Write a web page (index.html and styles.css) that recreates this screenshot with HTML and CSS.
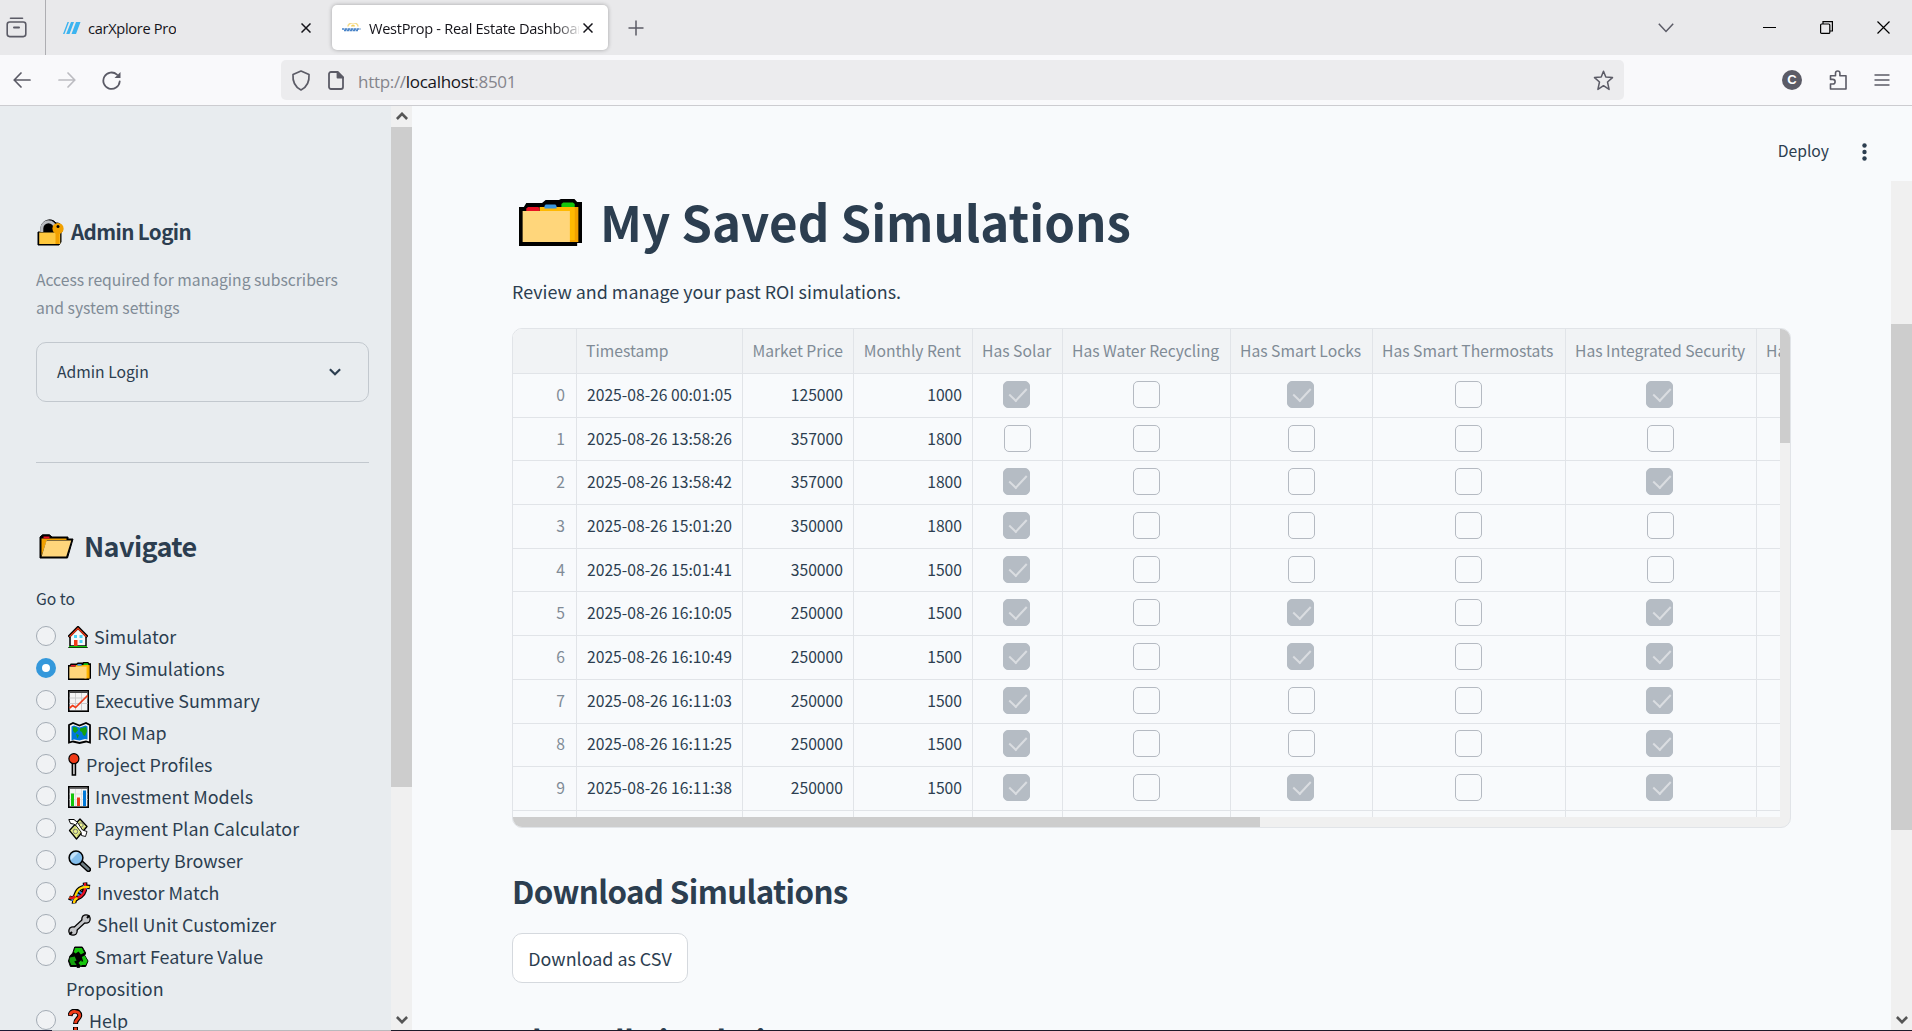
FILE: index.html
```html
<!DOCTYPE html>
<html lang="en">
<head>
<meta charset="utf-8">
<title>WestProp - Real Estate Dashboard</title>
<link rel="stylesheet" href="styles.css">
</head>
<body>
<header class="tabs">
  <div class="tab-history">
    <svg width="22" height="22" viewBox="0 0 22 22" fill="none" stroke="#5b5b66" stroke-width="1.6" stroke-linecap="round"><path d="M4.5 1.2h12"/><rect x="1.2" y="5" width="18.6" height="14.6" rx="2.5"/><path d="M8 10.5h5" stroke-width="2"/></svg>
  </div>
  <div class="tab">
    <svg class="fav" width="18" height="12" viewBox="0 0 18 12" fill="#3cb4f0"><path d="M4.5 0H6L1.5 12H0zM8 0h3L6.500 12H3.200zM13 0h4.500L13 12H8.500z"/></svg>
    <span class="tab-title">carXplore Pro</span>
    <svg class="x" width="10" height="10" viewBox="0 0 10 10" stroke="#15141a" stroke-width="1.5"><path d="M.5.500l9 9M9.500.500l-9 9"/></svg>
  </div>
  <div class="tab active">
    <svg class="fav" width="19" height="9" viewBox="0 0 19 9"><path d="M6 3.600a5 4 0 0 1 10 0" fill="none" stroke="#f5dc8b" stroke-width="1.600"/><path d="M9 3.500a2 2 0 0 1 4 0" fill="#f2cf60"/><path d="M0 6h18.500M2 7.500h14" stroke="#4a84c8" stroke-width="1.300" stroke-dasharray="2.500 .5"/></svg>
    <span class="tab-title">WestProp - Real Estate Dashboard</span>
    <svg class="x" width="10" height="10" viewBox="0 0 10 10" stroke="#15141a" stroke-width="1.500"><path d="M.5.500l9 9M9.500.500l-9 9"/></svg>
  </div>
  <svg class="plus" width="16" height="16" viewBox="0 0 16 16" stroke="#5b5b66" stroke-width="1.500"><path d="M8 .5v15M.5 8h15"/></svg>
  <div class="window">
    <svg width="16" height="10" viewBox="0 0 16 10" fill="none" stroke="#5b5b66" stroke-width="1.500"><path d="M.8.800L8 8.500 15.200.800"/></svg>
    <svg width="13" height="13" viewBox="0 0 13 13" stroke="#000" stroke-width="1"><path d="M0 6.500h13"/></svg>
    <svg width="13" height="13" viewBox="0 0 13 13" fill="none" stroke="#000" stroke-width="1.200"><rect x=".6" y="3" width="9.200" height="9.400" rx="1"/><path d="M3 3V.6h9.400V10H10"/></svg>
    <svg width="13" height="13" viewBox="0 0 13 13" stroke="#000" stroke-width="1.200"><path d="M.5.500l12 12M12.500.500l-12 12"/></svg>
  </div>
</header>
<nav class="toolbar">
  <svg class="back" width="18" height="16" viewBox="0 0 18 16" fill="none" stroke="#5b5b66" stroke-width="1.700" stroke-linecap="round" stroke-linejoin="round"><path d="M17 8H1.200M8 1L1.200 8 8 15"/></svg>
  <svg class="fwd" width="18" height="16" viewBox="0 0 18 16" fill="none" stroke="#bcbcc1" stroke-width="1.700" stroke-linecap="round" stroke-linejoin="round"><path d="M1 8h15.800M10 1l6.800 7-6.800 7"/></svg>
  <svg class="reload" width="20" height="19" viewBox="0 0 20 19" fill="none" stroke="#5b5b66" stroke-width="1.800" stroke-linecap="round"><path d="M17.700 10.500A8.200 8.200 0 1 1 15 3.600"/><path d="M18.500 1v6h-6z" fill="#5b5b66" stroke="none"/></svg>
  <div class="url">
    <svg width="20" height="21" viewBox="0 0 20 21" fill="none" stroke="#5b5b66" stroke-width="1.700" stroke-linejoin="round"><path d="M10 1L18 4.500C18.500 11 16 17 10 20 4 17 1.500 11 2 4.500z"/></svg>
    <svg class="doc" width="16" height="19" viewBox="0 0 16 19" fill="none" stroke="#5b5b66" stroke-width="1.800" stroke-linejoin="round"><path d="M3 1h6.500L15 6.500V16a2 2 0 0 1-2 2H3a2 2 0 0 1-2-2V3a2 2 0 0 1 2-2z"/><path d="M9.500 1v5.500H15z" fill="#5b5b66"/></svg>
    <span class="address">http://<b>localhost</b>:8501</span>
    <svg class="star" width="21" height="21" viewBox="0 0 21 21" fill="none" stroke="#5b5b66" stroke-width="1.500" stroke-linejoin="round"><path d="M10.500 1.200l2.300 5.900 6.700.5-5 4.400 1.600 7.400-5.600-3.700-5.600 3.700L6.500 12l-5-4.400 6.700-.5z"/></svg>
  </div>
  <div class="tools">
    <span class="account">C</span>
    <svg width="18" height="20" viewBox="0 0 18 20" fill="none" stroke="#5b5b66" stroke-width="1.600" stroke-linejoin="round"><path d="M1.500 19V14h2.300a2.200 2.200 0 0 0 0-4.600H1.500V5.800h5V3.200a2.200 2.200 0 0 1 4.400 0v2.600H17V19z"/></svg>
    <svg width="16" height="12" viewBox="0 0 16 12" stroke="#5b5b66" stroke-width="1.400" stroke-linecap="round"><path d="M1 1h14M1 6h14M1 11h14"/></svg>
  </div>
</nav>
<div class="app">
  <aside class="sidebar">
    <h3><svg class="lock" width="28" height="27" viewBox="0 0 28 27"><path d="M4 13V9a8.500 8.500 0 0 1 15-5 6 6 0 0 1 5 10v9l-2 3H1V13z" fill="#000" stroke="#000" stroke-linejoin="round"/><path d="M4.800 13V9.500a6.700 6.700 0 0 1 13.400 0" fill="none" stroke="#b9bcc0" stroke-width="3"/><rect x="2.200" y="13.500" width="21" height="11.500" fill="#ffc83d"/><path d="M18.500 14v11h4V13z" fill="#f2a100"/><circle cx="21" cy="9.500" r="5.600" fill="#f2a100"/><circle cx="21" cy="7.500" r="1.500" fill="#000"/></svg>Admin Login</h3>
    <p class="caption">Access required for managing subscribers and system settings</p>
    <div class="expander"><span>Admin Login</span><svg width="12" height="8" viewBox="0 0 12 8" fill="none" stroke="#2c3e50" stroke-width="2.200"><path d="M.9 1.200L6 6.200l5.100-5"/></svg></div>
    <hr>
    <h2><svg class="open" width="35" height="25" viewBox="0 0 35 25"><path d="M1 24V3L3.500.800h7L13 3h16v2h5L28.500 24z" fill="#000" stroke="#000" stroke-linejoin="round"/><path d="M2.500 22V4.500h25V6H8z" fill="#f2a100"/><path d="M4.500 2.500h6v2h-6z" fill="#e81123"/><path d="M7.500 6.500h24.700L27.200 22.500H2.600z" fill="#ffd67b"/></svg>Navigate</h2>
    <div class="label">Go to</div>
    <ul class="nav">
      <li><i></i><span><svg width="20" height="22" viewBox="0 0 20 22"><path d="M10 2L18 10v10H2V10z" fill="#f7f7f7" stroke="#000" stroke-width="1.500"/><path d="M1 21h18" stroke="#16c60c" stroke-width="2"/><path d="M0 21.700h20" stroke="#000" stroke-width=".8"/><path d="M.5 11L10 1.500l9.500 9.500" fill="none" stroke="#000" stroke-width="3"/><path d="M1.500 10.800L10 2.300l8.500 8.500" fill="none" stroke="#f03a17" stroke-width="1.400"/><path d="M6 14h3.500v6H6z" fill="#f03a17"/><path d="M6 9h3v3H6zM11.500 9h3v3h-3zM11.500 14h3v3h-3z" fill="#4cd3f7"/></svg> Simulator</span></li>
      <li class="on"><i></i><span><svg width="23" height="18" viewBox="0 0 52 47" preserveAspectRatio="none"><use href="#files"/></svg> My Simulations</span></li>
      <li><i></i><span><svg width="21" height="22" viewBox="0 0 21 22"><rect x=".8" y=".8" width="19.400" height="20.400" fill="#f4f4f4" stroke="#000" stroke-width="1.600"/><path d="M1.600 2.200h17.800" stroke="#444" stroke-width="1.600"/><path d="M1.600 8h18M1.600 13.500h18M7.500 3v17M13.500 3v17" stroke="#ccc"/><path d="M1.600 18l3-2.500 3 2 12-12" fill="none" stroke="#f03a17" stroke-width="1.700"/></svg> Executive Summary</span></li>
      <li><i></i><span><svg width="23" height="22" viewBox="0 0 23 22"><path d="M1 3l4-2 6.500 2.500L18 1l4 2v17.500l-4-1-6.500 1.500L5 19.500l-4 1z" fill="#f4f4f4" stroke="#000" stroke-width="1.800"/><path d="M3.500 4.500l2.500-1 5.500 2 6-2 2 1v13l-2.500-.5-5.500 1.500L6 17.500l-2.500 1z" fill="#0078d7"/><path d="M5 5l4 .5 1 3-3 2.500-2-2zM8 12l3 1-1.500 3.500zM12 6.500L18 5l1 4-2 5-2-1-1-3-2-1z" fill="#13a10e"/></svg> ROI Map</span></li>
      <li><i></i><span><svg width="12" height="23" viewBox="0 0 12 23"><path d="M4.300 10h3.200v12H4.300z" fill="#bbb" stroke="#000" stroke-width="1.400"/><circle cx="5.900" cy="5.700" r="5" fill="#f03a17" stroke="#000" stroke-width="1.200"/></svg> Project Profiles</span></li>
      <li><i></i><span><svg width="21" height="22" viewBox="0 0 21 22"><rect x=".8" y=".8" width="19.400" height="20.400" fill="#f4f4f4" stroke="#000" stroke-width="1.600"/><path d="M1.600 2.200h17.800" stroke="#444" stroke-width="1.200"/><path d="M1.600 8h18M1.600 13.500h18M7.500 3v17M13.500 3v17" stroke="#ddd"/><path d="M4.500 7.500V20" stroke="#16c60c" stroke-width="3"/><path d="M10.500 11.500V20" stroke="#f03a17" stroke-width="3"/><path d="M16.500 4.500V20" stroke="#0078d7" stroke-width="3"/></svg> Investment Models</span></li>
      <li><i></i><span><svg width="20" height="22" viewBox="0 0 20 22"><path d="M12 1l7 7.500L8.500 21 1.500 12.500z" fill="#e8f08c" stroke="#000" stroke-width="1.300" stroke-linejoin="round"/><path d="M4.500 12.500l7.500-9M9 18l7.500-9" stroke="#a3aa50" stroke-width=".8"/><circle cx="7.500" cy="13.500" r="2.200" fill="none" stroke="#777"/><circle cx="13" cy="7" r="2.200" fill="none" stroke="#777"/><path d="M.8 1.500H6l3.500 3L8 7.500 5.500 6 2.500 5.500z" fill="#fff" stroke="#000" stroke-width="1" stroke-linejoin="round"/><path d="M7.500 7l2-2.500 5 7.500 4.500 1.500-1.500 5-4-1-.5-3.500z" fill="#fff" stroke="#000" stroke-width=".9" stroke-linejoin="round"/></svg> Payment Plan Calculator</span></li>
      <li><i></i><span><svg width="23" height="22" viewBox="0 0 23 22"><path d="M13 12.500l7.500 7" stroke="#000" stroke-width="5.200" stroke-linecap="round"/><path d="M14 13.500l6.300 5.800" stroke="#6f7f85" stroke-width="2.600" stroke-linecap="round"/><circle cx="8" cy="7.800" r="6.900" fill="#83beec" stroke="#000" stroke-width="1.500"/><path d="M3 10L10.500 2.500A5.800 5.800 0 0 0 3 10z" fill="#c5e3f9"/></svg> Property Browser</span></li>
      <li><i></i><span><svg width="23" height="22" viewBox="0 0 23 22" fill="none"><path d="M1 15.500C8 19 7 12 10 8.500S16 4 22 5" stroke="#000" stroke-width="4.600"/><path d="M6 21.500c-.5-5 4-5 7-7.500S18 7 17 .5" stroke="#000" stroke-width="4.600"/><path d="M8 10l6 4v-5l-3-1z" fill="#000"/><path d="M8.500 12l3.500 2.500M10.500 9l4 3M15 3.500l4 3.500M3.500 17.500l3.500 2" stroke="#2b7de0" stroke-width="2"/><path d="M6 21c-.5-5 4-4.500 7-7S18 7 17 1" stroke="#e81123" stroke-width="2.400"/><path d="M1.500 15.500C8 18.500 7 12 10 8.500s6-4 11.500-3.500" stroke="#ffd800" stroke-width="2.200"/><path d="M1.500 15.500c3 1.500 4.500 0 5.500-1.500" stroke="#e81123" stroke-width="2.400"/><path d="M6 21c0-2.500 1-4 3.500-5" stroke="#ffd800" stroke-width="2.200"/></svg> Investor Match</span></li>
      <li><i></i><span><svg width="23" height="22" viewBox="0 0 23 22"><path d="M5 17L18 5" stroke="#000" stroke-width="5.400"/><circle cx="18" cy="5" r="4.800"/><circle cx="5" cy="17" r="4.800"/><path d="M5 17L18 5" stroke="#c3c5c8" stroke-width="3"/><circle cx="18" cy="5" r="3.500" fill="#c3c5c8"/><circle cx="5" cy="17" r="3.500" fill="#c3c5c8"/><path d="M19 4L21.500 1.500M4 18L1.500 20.500" stroke="#000" stroke-width="2"/></svg> Shell Unit Customizer</span></li>
      <li><i></i><span><svg width="21" height="22" viewBox="0 0 22 22" preserveAspectRatio="none"><path d="M7 1h8l3.500 6-1 2.500L21 15l-2.500 5.500H13L11 22l-2.500-1.500h-6L.5 15 2 10l3-3z" fill="#000" stroke="#000" stroke-linejoin="round"/><path d="M7.500 2h7l2.500 4.500-3.500 2-2.500-3-3 2-2-1.500z" fill="#16c60c"/><path d="M2 11.500l5-1 2 4-2.500 1L9 19H3.500l-2-4z" fill="#13a10e"/><path d="M14.500 11l3-1.500 3 5.500-2 4H14v1.500L11 17l3-3v1.500h2z" fill="#16c60c"/></svg> Smart Feature Value Proposition</span></li>
      <li><i></i><span><svg width="15" height="23" viewBox="0 0 15 23" fill="none"><path d="M2 7C2.500 0 12 1 11.700 6.500 11.500 10 7.500 10 7.500 15M7.500 18v5" stroke="#000" stroke-width="5"/><path d="M2 6.200C3 1 12 1.500 11.700 6.500 11.500 10 7.500 10 7.500 14.200M7.500 18.500v4" stroke="#f03a17" stroke-width="2.800"/></svg> Help</span></li>
    </ul>
  </aside>
  <div class="sb side-sb">
    <svg width="12" height="8" viewBox="0 0 12 8" fill="none" stroke="#555" stroke-width="2.600"><path d="M.9 7L6 1.800 11.100 7"/></svg>
    <div class="thumb"></div>
    <svg width="12" height="8" viewBox="0 0 12 8" fill="none" stroke="#555" stroke-width="2.600"><path d="M.9 1L6 6.200 11.100 1"/></svg>
  </div>
  <main>
    <div class="topbar"><span>Deploy</span><svg width="5" height="18" viewBox="0 0 5 18" fill="#2c3e50"><circle cx="2.500" cy="2.500" r="2.200"/><circle cx="2.500" cy="9" r="2.200"/><circle cx="2.500" cy="15.500" r="2.200"/></svg></div>
    <div class="scroll">
      <div class="content">
        <h1><svg width="63" height="47" viewBox="0 0 52 47" preserveAspectRatio="none"><g id="files"><path d="M0 8h4l2-4h13l3-3h11l3-2h9l3 4h4v41h-4v3H0z" fill="#000"/><path d="M37 8h12v35H37z" fill="#f2a100"/><path d="M17 8h29v33H17z" fill="#ffb900"/><path d="M3 12h39v31H3z" fill="#ffd67b"/><path d="M6 12V9.500l1.500-1.500H16l1 1.500V12z" fill="#e81123"/><path d="M21 9.500V7l1-1.500h8L31 7v2.500z" fill="#3a96dd"/><path d="M35 8V5l1.500-1.500h8L46 5v3z" fill="#16c60c"/></g></svg>My Saved Simulations</h1>
        <p class="lead">Review and manage your past ROI simulations.</p>
        <div class="frame">
          <div class="view">
            <table>
              <colgroup><col class="w0"><col class="w1"><col class="w2"><col class="w3"><col class="w4"><col class="w5"><col class="w6"><col class="w7"><col class="w8"><col class="w9"></colgroup>
              <thead><tr><th></th><th>Timestamp</th><th class="n">Market Price</th><th class="n">Monthly Rent</th><th>Has Solar</th><th>Has Water Recycling</th><th>Has Smart Locks</th><th>Has Smart Thermostats</th><th>Has Integrated Security</th><th>Has Backup</th></tr></thead>
              <tbody>
                <tr><td>0</td><td>2025-08-26 00:01:05</td><td>125000</td><td>1000</td><td class="c y"></td><td class="c"></td><td class="c y"></td><td class="c"></td><td class="c y"></td><td></td></tr>
                <tr><td>1</td><td>2025-08-26 13:58:26</td><td>357000</td><td>1800</td><td class="c"></td><td class="c"></td><td class="c"></td><td class="c"></td><td class="c"></td><td></td></tr>
                <tr><td>2</td><td>2025-08-26 13:58:42</td><td>357000</td><td>1800</td><td class="c y"></td><td class="c"></td><td class="c"></td><td class="c"></td><td class="c y"></td><td></td></tr>
                <tr><td>3</td><td>2025-08-26 15:01:20</td><td>350000</td><td>1800</td><td class="c y"></td><td class="c"></td><td class="c"></td><td class="c"></td><td class="c"></td><td></td></tr>
                <tr><td>4</td><td>2025-08-26 15:01:41</td><td>350000</td><td>1500</td><td class="c y"></td><td class="c"></td><td class="c"></td><td class="c"></td><td class="c"></td><td></td></tr>
                <tr><td>5</td><td>2025-08-26 16:10:05</td><td>250000</td><td>1500</td><td class="c y"></td><td class="c"></td><td class="c y"></td><td class="c"></td><td class="c y"></td><td></td></tr>
                <tr><td>6</td><td>2025-08-26 16:10:49</td><td>250000</td><td>1500</td><td class="c y"></td><td class="c"></td><td class="c y"></td><td class="c"></td><td class="c y"></td><td></td></tr>
                <tr><td>7</td><td>2025-08-26 16:11:03</td><td>250000</td><td>1500</td><td class="c y"></td><td class="c"></td><td class="c"></td><td class="c"></td><td class="c y"></td><td></td></tr>
                <tr><td>8</td><td>2025-08-26 16:11:25</td><td>250000</td><td>1500</td><td class="c y"></td><td class="c"></td><td class="c"></td><td class="c"></td><td class="c y"></td><td></td></tr>
                <tr><td>9</td><td>2025-08-26 16:11:38</td><td>250000</td><td>1500</td><td class="c y"></td><td class="c"></td><td class="c y"></td><td class="c"></td><td class="c y"></td><td></td></tr>
                <tr><td></td><td></td><td></td><td></td><td></td><td></td><td></td><td></td><td></td><td></td></tr>
              </tbody>
            </table>
          </div>
          <div class="vbar"><div></div></div>
          <div class="hbar"><div></div></div>
        </div>
        <h2 class="sec">Download Simulations</h2>
        <button>Download as CSV</button>
        <h2 class="sec last">Clear All Simulations</h2>
      </div>
      <div class="sb main-sb">
        <div class="thumb"></div>
        <svg width="12" height="8" viewBox="0 0 12 8" fill="none" stroke="#555" stroke-width="2.600"><path d="M.9 1L6 6.200 11.100 1"/></svg>
      </div>
    </div>
  </main>
</div>
<footer class="edge"></footer>
</body>
</html>
```
FILE: styles.css
```css
* { box-sizing: border-box; }
body {
  margin: 0; width: 1912px; height: 1031px; overflow: hidden;
  display: flex; flex-direction: column;
  font-family: "Noto Sans CJK JP", "Noto Sans", sans-serif;
  color: #2c3e50; background: #f8fafc;
}
h1, h2, h3, p, ul { margin: 0; padding: 0; }
svg { flex: none; }

/* browser chrome */
.tabs { flex: none; height: 55px; background: #e9e9eb; display: flex; align-items: center; font-family: "Open Sans", "Noto Sans", sans-serif; color: #15141a; }
.tab-history { width: 46px; height: 55px; padding: 0 0 0 6px; border-right: 1px solid #aeaeb2; display: flex; align-items: center; }
.tab { width: 286px; height: 45px; padding: 0 21px 0 17px; display: flex; align-items: center; font-size: 14.6px; letter-spacing: -.3px; }
.tab .x { margin-left: auto; }
.tab-title { margin-left: 7px; white-space: nowrap; overflow: hidden; }
.tab.active { width: 276px; padding: 0 15px 0 10px; border-radius: 5px; background: #fff; box-shadow: 0 0 4px rgba(0,0,0,.3); }
.tab.active .tab-title { margin-left: 8px; width: 210px; -webkit-mask-image: linear-gradient(90deg, #000 88%, transparent 102%); mask-image: linear-gradient(90deg, #000 88%, transparent 102%); }
.plus { margin-left: 20px; }
.window { margin-left: auto; display: flex; align-items: center; padding-right: 22px; }
.window svg:nth-child(2) { margin-left: 89px; }
.window svg:nth-child(3), .window svg:nth-child(4) { margin-left: 44px; }

.toolbar { flex: none; height: 51px; background: #f9f9fb; border-bottom: 1px solid #ccccd0; display: flex; align-items: center; padding-left: 13px; }
.fwd { margin-left: 27px; }
.reload { margin-left: 26px; }
.url { width: 1343px; height: 40px; margin-left: 159px; border-radius: 5px; background: #ececee; display: flex; align-items: center; padding: 0 10px; }
.doc { margin-left: 17px; }
.address { margin-left: 14px; font: 17px/24px "Open Sans", "Noto Sans", sans-serif; letter-spacing: -.3px; color: #85858c; padding-top: 3px; }
.address b { font-weight: 400; color: #15141a; }
.star { margin-left: auto; }
.tools { margin-left: auto; display: flex; align-items: center; padding-right: 22px; }
.account { width: 20px; height: 20px; border-radius: 50%; background: #5b5b66; color: #fff; font: bold 13px/20px "Liberation Sans", sans-serif; text-align: center; margin-right: 27px; }
.tools svg:last-child { margin-left: 27px; }

/* page */
.app { flex: none; height: 924px; display: flex; overflow: hidden; }
.sidebar { flex: none; width: 391px; padding: 110px 22px 0 36px; background: #e8ecef; overflow: hidden; }
.sidebar h3 { height: 30px; display: flex; align-items: center; font-size: 20.6px; font-weight: 700; line-height: 30px; letter-spacing: -.6px; }
.lock { margin: 2px 6px 0 1px; }
.caption { margin: 20px -10px 0 0; padding-right: 30px; font-size: 15.7px; line-height: 28px; color: #808b96; letter-spacing: -.02px; }
.expander { margin-top: 20px; height: 60px; border: 1px solid #c2c8ce; border-radius: 10px; padding: 0 27px 0 20px; display: flex; align-items: center; justify-content: space-between; font-size: 15.7px; line-height: 28px; }
.sidebar hr { border: 0; height: 1px; background: #c2c8ce; margin: 60px 0 0; }
.sidebar h2 { margin-top: 63px; height: 40px; display: flex; align-items: center; font-size: 27px; font-weight: 700; line-height: 40px; letter-spacing: -.6px; }
.open { margin: 1px 10px 0 3px; }
.label { margin-top: 19px; font-size: 15.7px; line-height: 28px; }
.nav { list-style: none; margin-top: 7px; }
.nav li { display: flex; font-size: 17.9px; line-height: 32px; }
.nav li span { padding-right: 60px; }
.nav i { flex: none; width: 20px; height: 20px; margin: 6px 10px 0 0; border-radius: 50%; background: #f0f2f4; border: 1px solid #a3abb4; }
.nav .on i { border: 6px solid #3498db; background: #fff; }
.nav span svg { vertical-align: -4px; margin: 0 2.500px 0 1.500px; }

.sb { flex: none; width: 21px; background: #f0f0f0; display: flex; flex-direction: column; align-items: center; }
.sb .thumb { width: 21px; background: #cdcdcd; }
.sb svg:last-child { margin: auto 0 6px; }
.side-sb svg:first-child { margin: 6px 0 7px; }
.side-sb .thumb { height: 660px; }
.main-sb { padding-top: 143px; }
.main-sb .thumb { height: 506px; }

main { flex: 1; display: flex; flex-direction: column; background: #f8fafc; }
.topbar { flex: none; height: 75px; display: flex; align-items: center; justify-content: flex-end; padding: 15px 45px 0 0; font-size: 15.7px; line-height: 28px; }
.topbar svg { margin: 1px 0 0 33px; }
.scroll { flex: 1; display: flex; min-height: 0; }
.content { flex: 1; padding: 7px 100px 0; overflow: hidden; }
h1 { height: 66px; display: flex; align-items: center; font-size: 49.2px; line-height: 66px; font-weight: 700; white-space: nowrap; }
h1 svg { margin: 3px 18px 0 7px; }
.lead { margin-top: 21px; font-size: 17.9px; line-height: 32px; }
.frame { margin-top: 21px; width: 1279px; height: 500px; border: 1px solid #e1e4e8; border-radius: 10px; overflow: hidden; display: grid; grid-template: 488px 10px / 1267px 10px; background: #f0f0f0; }
.view { overflow: hidden; background: #f8fafc; }
.vbar div { height: 114px; background: #cdcdcd; }
.hbar { grid-column: 1 / 3; }
.hbar div { width: 747px; height: 10px; background: #cdcdcd; }
table { width: 1367px; table-layout: fixed; border-collapse: separate; border-spacing: 0; font-size: 15.7px; line-height: 20px; }
.w0 { width: 64px; } .w1 { width: 166px; } .w2 { width: 111px; } .w3 { width: 119px; } .w4 { width: 90px; }
.w5 { width: 168px; } .w6 { width: 142px; } .w7 { width: 193px; } .w8 { width: 191px; } .w9 { width: 123px; }
th, td { height: 43.7px; padding: 0 10px 1px 9px; border-right: 1px solid #e1e4e8; border-bottom: 1px solid #e1e4e8; text-align: right; white-space: nowrap; }
td:nth-child(2) { padding-left: 0; }
th { height: 45px; padding-right: 0; background: #f1f3f5; color: #808b96; font-weight: 400; text-align: left; }
th.n { text-align: right; padding: 0 10px 1px 0; }
th.n + th.n { padding-right: 11px; }
td:first-child { color: #808b96; padding-right: 11px; }
.c { text-align: center; font-size: 0; padding: 0 1px 2px 0; }
.c::before { content: ""; display: inline-block; width: 25px; height: 25px; border: 1px solid #b5bac2; border-radius: 5px; vertical-align: middle; }
.y::before { border-color: #b5bcc4; background: #b5bcc4; }
.y::after { content: ""; display: inline-block; width: 8px; height: 15px; margin: -4px 8.500px 0 -16.500px; border: solid #dadde1; border-width: 0 2px 2px 0; transform: rotate(43deg); vertical-align: middle; }
.sec { margin-top: 41px; font-size: 31.3px; line-height: 44px; font-weight: 700; white-space: nowrap; letter-spacing: -.63px; }
button { display: block; margin-top: 20px; width: 176px; height: 50px; padding: 0; border: 1px solid #d5d9de; border-radius: 10px; background: #fff; color: inherit; font: 17.9px/30px "Noto Sans CJK JP", sans-serif; }
.sec.last { margin-top: 36px; }
.edge { flex: none; height: 1px; background: linear-gradient(90deg, #1d1b35 52px, #b9b9bd 52px 391px, #1d1b2a 391px); }
```
